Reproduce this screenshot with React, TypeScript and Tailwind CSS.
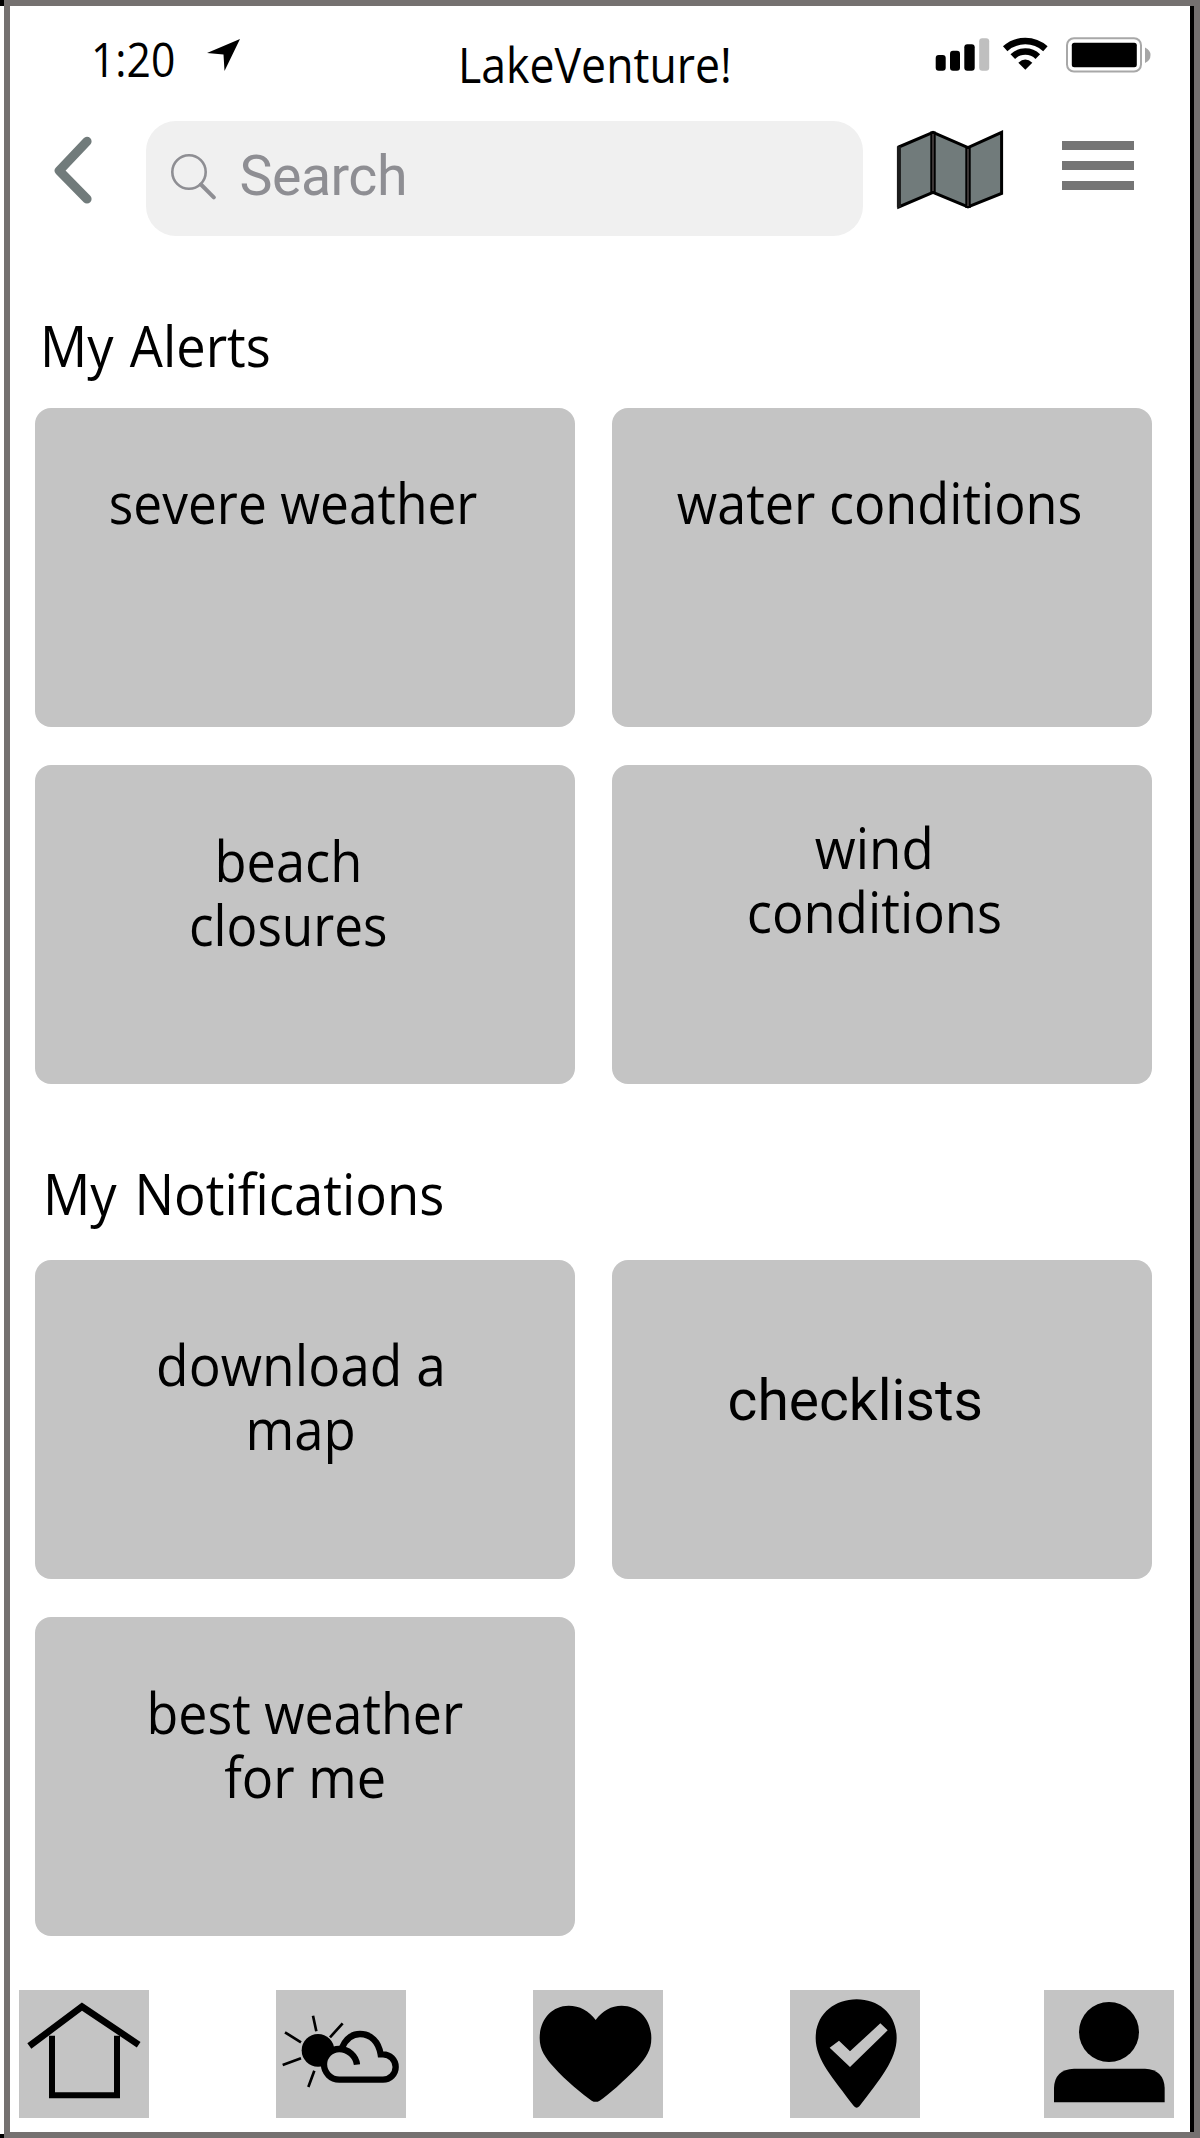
import type { ReactNode } from "react";

type Line = { text: string; stretch: string };
type CardProps = { lines: Line[]; className: string };

function Card({ lines, className }: CardProps) {
  return (
    <button
      type="button"
      className={`flex h-full w-full flex-col items-center justify-start rounded-[16px] bg-[#c4c4c4] text-[57px] leading-[64px] whitespace-nowrap text-black ${className}`}
    >
      {lines.map((line) => (
        <span key={line.text} className={`block ${line.stretch}`}>
          {line.text}
        </span>
      ))}
    </button>
  );
}

const alerts: CardProps[] = [
  { lines: [{ text: "severe weather", stretch: "scale-x-[0.903]" }], className: "pt-[62.5px] pr-[25px]" },
  { lines: [{ text: "water conditions", stretch: "scale-x-[0.915]" }], className: "pt-[62.5px] pr-[4px]" },
  {
    lines: [
      { text: "beach", stretch: "scale-x-[0.92]" },
      { text: "closures", stretch: "scale-x-[0.9]" },
    ],
    className: "pt-[63px] pr-[33px]",
  },
  {
    lines: [
      { text: "wind", stretch: "scale-x-[0.927]" },
      { text: "conditions", stretch: "scale-x-[0.922]" },
    ],
    className: "pt-[50px] pr-[15px]",
  },
];

const notifications: CardProps[] = [
  {
    lines: [
      { text: "download a", stretch: "scale-x-[0.935]" },
      { text: "map", stretch: "scale-x-[0.925]" },
    ],
    className: "pt-[71.5px] pr-[8px]",
  },
  {
    lines: [{ text: "checklists", stretch: "font-['Roboto',sans-serif]" }],
    className: "pt-[109px] pr-[53px]",
  },
  {
    lines: [
      { text: "best weather", stretch: "scale-x-[0.911]" },
      { text: "for me", stretch: "scale-x-[0.918]" },
    ],
    className: "pt-[63px]",
  },
];

function CardGrid({ cards }: { cards: CardProps[] }) {
  return (
    <div className="ml-[25.3px] grid w-[1116.3px] auto-rows-[318.9px] grid-cols-2 gap-x-[37px] gap-y-[38.3px]">
      {cards.map((card) => (
        <Card key={card.lines[0].text} {...card} />
      ))}
    </div>
  );
}

function StatusBar() {
  return (
    <div className="flex h-[115px] items-start whitespace-nowrap">
      <span className="mt-[23px] ml-[81px] block w-[85px] origin-left scale-x-[0.888] text-[48px] leading-[60px]">
        1:20
      </span>
      <svg className="mt-[32px] ml-[29.5px] h-[34px] w-[36px] shrink-0" viewBox="205.5 38 36 34">
        <path d="M206.5 53 L239.5 39 L224 71 L223 54.5 Z" />
      </svg>
      <h1 className="mt-[27.5px] ml-[216px] block w-[275px] origin-left scale-x-[0.91] text-[49px] leading-[60px]">
        LakeVenture!
      </h1>
      <svg className="mt-[28px] ml-[199.5px] h-[42px] w-[220px] shrink-0" viewBox="932 34 220 42">
        <rect x="935.7" y="55" width="10" height="15.7" rx="3" />
        <rect x="950" y="50.7" width="10" height="20" rx="3" />
        <rect x="964.3" y="44.3" width="10.4" height="26.4" rx="3" />
        <rect x="979.2" y="38.3" width="10" height="32.4" rx="3" fill="#bfbfbf" />
        <g fill="none" stroke="#000" strokeWidth="6.6">
          <path d="M1005.2 48.8 A29.9 29.9 0 0 1 1045.4 48.8" />
          <path d="M1012.8 56.6 A18 18 0 0 1 1037.8 56.6" />
        </g>
        <path d="M1018.3 62.8 Q1025.3 56 1032.3 62.8 L1025.3 69.8 Z" />
        <rect x="1067" y="38.2" width="74" height="33.4" rx="7" fill="none" stroke="#a8a8a8" strokeWidth="2" />
        <rect x="1071.8" y="42.8" width="65" height="24.4" rx="2.5" />
        <path d="M1145 47.5 Q1150.5 50 1150.5 55 Q1150.5 60.5 1145 63 Z" fill="#a6a6a6" />
      </svg>
    </div>
  );
}

function Header() {
  return (
    <div className="flex h-[115px] items-start">
      <svg className="mt-[9px] ml-[40px] h-[78px] w-[46px] shrink-0" viewBox="50 130 46 78">
        <path
          d="M87 141.3 L59.3 170.7 L87 199"
          fill="none"
          stroke="#717b7b"
          strokeWidth="9.2"
          strokeLinecap="round"
          strokeLinejoin="round"
        />
      </svg>
      <div className="ml-[50px] flex h-[115px] w-[717px] shrink-0 items-center rounded-[30px] bg-[#f0f0f0] pb-[5px]">
        <svg className="ml-[24px] h-[48px] w-[48px] shrink-0" viewBox="170 152 48 48">
          <g fill="none" stroke="#8e8e93">
            <circle cx="189" cy="172" r="16.7" strokeWidth="2.6" />
            <path d="M201 184.5 L213.8 197.3" strokeWidth="4" strokeLinecap="round" />
          </g>
        </svg>
        <span className="ml-[21.5px] font-['Roboto',sans-serif] text-[55.5px] leading-[65px] tracking-[-0.5px] text-[#8e8e93]">
          Search
        </span>
      </div>
      <svg className="mt-[7px] ml-[33px] h-[84px] w-[110px] shrink-0" viewBox="896 128 110 84">
        <path
          d="M898.8 147 L933 132.3 L968 147.6 L1001.6 132.3 V193.5 L968 207 L933 192.3 L898.8 207 Z"
          fill="#717b7b"
          stroke="#000"
          strokeWidth="3"
        />
        <path d="M898.9 146.5 V207.5" stroke="#1c1c1c" strokeWidth="4" />
        <path d="M933 131.5 V193.5 M968 147 V208" stroke="#000" strokeWidth="5.4" />
        <path d="M933 134 V191 M968 149 V206" stroke="#3b3535" strokeWidth="2" />
      </svg>
      <div className="mt-[20.2px] ml-[56px] flex w-[72px] flex-col gap-[11px]">
        <div className="h-[9px] bg-[#757575]" />
        <div className="h-[9px] bg-[#757575]" />
        <div className="h-[9px] bg-[#757575]" />
      </div>
    </div>
  );
}

function Tile({ viewBox, className = "", children }: { viewBox: string; className?: string; children: ReactNode }) {
  return (
    <button type="button" className={`h-[128px] w-[130px] shrink-0 bg-[#c4c4c4] ${className}`}>
      <svg className="block h-full w-full" viewBox={viewBox}>
        {children}
      </svg>
    </button>
  );
}

function BottomNav() {
  return (
    <nav className="ml-[9px] flex">
      <Tile viewBox="57 91 390 384">
        <g fill="none" stroke="#000">
          <path d="M88 259 L246 141 L416 255" strokeWidth="20" />
          <path d="M156 228 V407 H351 V228" strokeWidth="18" />
        </g>
      </Tile>
      <Tile viewBox="828 91 390 384" className="ml-[127px]">
        <circle cx="954" cy="272" r="49" />
        <path
          d="M939 168 L949 215 M1028 191 L990 233 M855 218 L903 248 M848 316 L903 296 M943 333 L925 382"
          fill="none"
          stroke="#000"
          strokeWidth="8"
        />
        <path
          d="M1018 360 H1149 A38 38 0 0 0 1149 284 H1142 A64 64 0 0 0 1028 262 L1018 268 A46 46 0 0 0 1018 360 Z"
          fill="#c4c4c4"
        />
        <g fill="none" stroke="#000" strokeWidth="19">
          <path d="M1071 315 C1068 290 1045 268 1018 268 A46 46 0 0 0 1018 360 H1149 A38 38 0 0 0 1149 284 H1142 C1136 246 1113 223 1080 223 C1054 223 1038 238 1027 262" />
        </g>
      </Tile>
      <Tile viewBox="340 91 390 384" className="ml-[127px]">
        <path d="M528 181 C508 153 480 138 447 138 C396 138 360 180 360 235 C360 272 378 295 402 322 C436 361 490 405 516 423 Q528 430 540 423 C566 405 612 365 652 324 C680 293 695 272 695 235 C695 180 658 138 606 138 C575 138 548 153 528 181 Z" />
      </Tile>
      <Tile viewBox="31 91 390 384" className="ml-[127px]">
        <path d="M231 119 C163 119 108 165 108 235 C108 300 160 355 223 440 Q231 448 239 440 C300 360 351 300 351 235 C351 165 299 119 231 119 Z" />
        <path d="M150 264 L178 243 L211 275 L302 191 L324 212 L211 322 Z" fill="#c4c4c4" />
      </Tile>
      <Tile viewBox="792 91 390 384" className="ml-[124px]">
        <circle cx="987" cy="217" r="90" />
        <path d="M822 428 V385 Q824 329 882 327 H1095 Q1152 330 1154 385 V428 Z" />
      </Tile>
    </nav>
  );
}

export default function App() {
  return (
    <div className="flex h-[2138px] w-[1200px] overflow-hidden bg-white font-['Open_Sans',sans-serif] text-black">
      <div className="flex w-[4px] shrink-0 flex-col justify-between">
        <div className="h-[6px] bg-black" />
        <div className="h-[4px] bg-black" />
      </div>
      <div className="flex w-[1196px] border-6 border-[#757170]">
        <main className="flex w-[1184px] shrink-0 flex-col border-r-4 border-black bg-white">
          <StatusBar />
          <Header />
          <h2 className="mt-[76.8px] mb-[31px] ml-[30.3px] w-fit origin-left scale-x-[0.92] text-[57px] leading-[64px] [word-spacing:3px]">
            My Alerts
          </h2>
          <CardGrid cards={alerts} />
          <h2 className="mt-[77px] mb-[35.2px] ml-[33px] w-fit origin-left scale-x-[0.923] text-[57px] leading-[64px] [word-spacing:4.5px]">
            My Notifications
          </h2>
          <CardGrid cards={notifications} />
          <div className="mt-[54.3px]">
            <BottomNav />
          </div>
        </main>
      </div>
    </div>
  );
}
